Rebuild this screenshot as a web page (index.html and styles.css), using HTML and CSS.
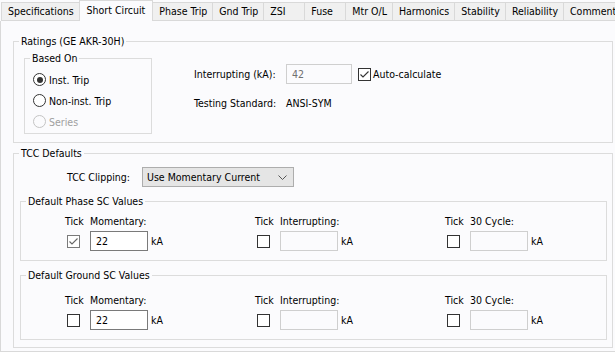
FILE: index.html
```html
<!DOCTYPE html>
<html lang="en">
<head>
    <meta charset="UTF-8">
    <title>Short Circuit</title>
    <link rel="stylesheet" href="styles.css">
</head>
<body>
    <!-- Tab strip -->
    <div class="tabs">
        <div class="tab">Specifications</div>
        <div class="tab active">Short Circuit</div>
        <div class="tab">Phase Trip</div>
        <div class="tab">Gnd Trip</div>
        <div class="tab">ZSI</div>
        <div class="tab">Fuse</div>
        <div class="tab">Mtr O/L</div>
        <div class="tab">Harmonics</div>
        <div class="tab">Stability</div>
        <div class="tab">Reliability</div>
        <div class="tab last">Comment</div>
    </div>

    <div class="page">
        <!-- Ratings -->
        <fieldset class="group ratings">
            <legend>Ratings (GE AKR-30H)</legend>
            <div class="ratings-body">
                <fieldset class="group based-on">
                    <legend>Based On</legend>
                    <div class="radios">
                        <div class="radio-row"><span class="radio checked"></span>Inst. Trip</div>
                        <div class="radio-row"><span class="radio"></span>Non-inst. Trip</div>
                        <div class="radio-row disabled"><span class="radio"></span>Series</div>
                    </div>
                </fieldset>
                <div class="rating-fields">
                    <span>Interrupting (kA):</span>
                    <div class="inline">
                        <span class="textbox off interrupt">42</span>
                        <span class="check">
                            <svg width="11" height="11" viewBox="0 0 11 11"><path d="M1.5 5.5 L4 8 L9.5 2.5" fill="none" stroke="#333" stroke-width="1.1"/></svg>
                        </span>
                        <span>Auto-calculate</span>
                    </div>
                    <span>Testing Standard:</span>
                    <span>ANSI-SYM</span>
                </div>
            </div>
        </fieldset>

        <!-- TCC Defaults -->
        <fieldset class="group tcc">
            <legend>TCC Defaults</legend>
            <div class="tcc-body">
                <div class="clip-row">
                    <span class="clip-label">TCC Clipping:</span>
                    <div class="select">
                        <span>Use Momentary Current</span>
                        <svg width="9" height="5" viewBox="0 0 9 5"><path d="M0.5 0.5 L4.5 4.5 L8.5 0.5" fill="none" stroke="#555" stroke-width="1"/></svg>
                    </div>
                </div>

                <fieldset class="group sc">
                    <legend>Default Phase SC Values</legend>
                    <div class="sc-row">
                        <div class="sc-col">
                            <span>Tick</span><span>Momentary:</span><span></span>
                            <span class="check soft">
                                <svg width="11" height="11" viewBox="0 0 11 11"><path d="M1.5 5.5 L4 8 L9.5 2.5" fill="none" stroke="#666" stroke-width="1.1"/></svg>
                            </span>
                            <span class="textbox">22</span><span class="unit">kA</span>
                        </div>
                        <div class="sc-col">
                            <span>Tick</span><span>Interrupting:</span><span></span>
                            <span class="check"></span>
                            <span class="textbox off"></span><span class="unit">kA</span>
                        </div>
                        <div class="sc-col">
                            <span>Tick</span><span>30 Cycle:</span><span></span>
                            <span class="check"></span>
                            <span class="textbox off"></span><span class="unit">kA</span>
                        </div>
                    </div>
                </fieldset>

                <fieldset class="group sc">
                    <legend>Default Ground SC Values</legend>
                    <div class="sc-row ground">
                        <div class="sc-col">
                            <span>Tick</span><span>Momentary:</span><span></span>
                            <span class="check"></span>
                            <span class="textbox">22</span><span class="unit">kA</span>
                        </div>
                        <div class="sc-col">
                            <span>Tick</span><span>Interrupting:</span><span></span>
                            <span class="check"></span>
                            <span class="textbox off"></span><span class="unit">kA</span>
                        </div>
                        <div class="sc-col">
                            <span>Tick</span><span>30 Cycle:</span><span></span>
                            <span class="check"></span>
                            <span class="textbox off"></span><span class="unit">kA</span>
                        </div>
                    </div>
                </fieldset>
            </div>
        </fieldset>
    </div>
</body>
</html>
```

FILE: styles.css
```css
body {
    margin: 0;
    width: 615px;
    height: 352px;
    overflow: hidden;
    background: #fbfbfd;
    font-family: "DejaVu Sans Condensed", "Liberation Sans", sans-serif;
    font-size: 10.5px;
    color: #000;
}
.tabs {
    display: flex;
    align-items: flex-end;
    height: 21px;
    padding-left: 1px;
}
.tab {
    box-sizing: border-box;
    height: 19px;
    min-width: 41px;
    padding: 0 5px 0 6px;
    line-height: 17px;
    white-space: nowrap;
    background: #f0f0f0;
    border: 1px solid #d9d9d9;
    border-right: none;
}
.tab.last {
    flex: 1;
}
.tab.active {
    height: 21px;
    line-height: 19px;
    padding: 0 7px;
    background: #fbfbfd;
    border-bottom: none;
    border-right: 1px solid #d9d9d9;
}
.tab.active + .tab {
    border-left: none;
}
.page {
    box-sizing: border-box;
    height: 331px;
    padding-top: 14px;
    border-left: 1px solid #d9d9d9;
    border-bottom: 1px solid #d9d9d9;
}
.group {
    box-sizing: border-box;
    min-width: 0;
    margin: 0;
    padding: 0;
    border: 1px solid #dcdcdc;
}
.group legend {
    margin-left: 5px;
    padding: 0 2px;
    line-height: 13px;
}
.ratings {
    width: 600px;
    margin-left: 12px;
}
.ratings-body {
    display: flex;
    align-items: flex-start;
    padding: 0 0 8px 10px;
}
.based-on {
    width: 128px;
    margin-top: 4px;
}
.radios {
    padding: 4px 0 1px 8px;
}
.radio-row {
    display: flex;
    align-items: center;
    gap: 3px;
    height: 21px;
}
.radio-row.disabled {
    color: #a0a0a0;
}
.radio {
    box-sizing: border-box;
    width: 13px;
    height: 13px;
    border: 1px solid #333;
    border-radius: 50%;
    background: #fff;
    display: flex;
    align-items: center;
    justify-content: center;
}
.radio.checked::after {
    content: "";
    width: 6px;
    height: 6px;
    border-radius: 50%;
    background: #333;
}
.disabled .radio {
    border-color: #c4c4c4;
    background: #fbfbfd;
}
.rating-fields {
    display: grid;
    grid-template-columns: 92px auto;
    row-gap: 13px;
    align-items: center;
    margin: 16px 0 0 42px;
}
.inline {
    display: flex;
    align-items: center;
}
.textbox {
    box-sizing: border-box;
    display: block;
    height: 20px;
    padding-left: 5px;
    line-height: 18px;
    background: #fff;
    border: 1px solid #7a7a7a;
}
.textbox.off {
    background: #fbfbfd;
    border-color: #cfcfcf;
    color: #707070;
}
.textbox.interrupt {
    width: 66px;
    margin-right: 6px;
}
.check {
    box-sizing: border-box;
    width: 13px;
    height: 13px;
    border: 1px solid #333;
    background: #fff;
    display: flex;
    margin-right: 2px;
}
.check.soft {
    border-color: #7a7a7a;
}
.tcc {
    width: 600px;
    margin: 4px 0 0 12px;
}
.tcc-body {
    padding: 0 4px 7px 6px;
}
.clip-row {
    display: flex;
    align-items: center;
    margin-top: 7px;
    padding-left: 47px;
}
.clip-label {
    width: 75px;
}
.select {
    box-sizing: border-box;
    width: 152px;
    height: 20px;
    display: flex;
    align-items: center;
    justify-content: space-between;
    padding: 0 6px 0 4px;
    background: #e5e5e5;
    border: 1px solid #adadad;
}
.sc {
    margin: 8px 1px 0 0;
}
.sc-row {
    display: flex;
    padding: 6px 0 9px 44px;
}
.sc-row.ground {
    padding-top: 11px;
}
.sc-col {
    flex-shrink: 0;
    width: 190px;
    display: grid;
    grid-template-columns: 25px 58px auto;
    grid-template-rows: 13px 20px;
    row-gap: 4px;
    align-items: center;
}
.sc-col .check {
    margin-left: 2px;
}
.sc-col .textbox {
    width: 58px;
}
.unit {
    margin-left: 3px;
}
```
